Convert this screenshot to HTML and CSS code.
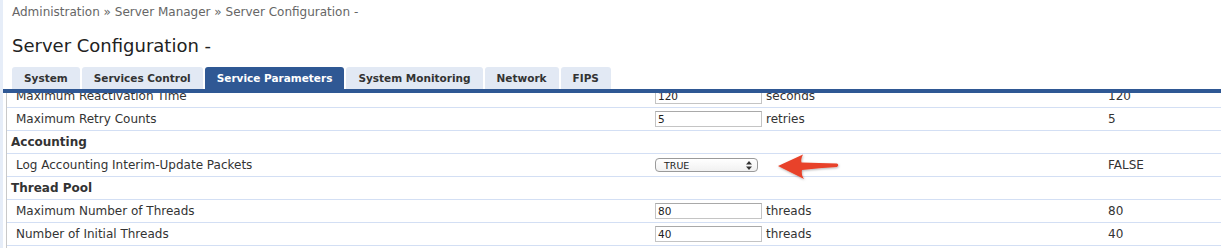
FILE: index.html
```html
<!DOCTYPE html>
<html lang="en">
<head>
    <meta charset="UTF-8">
    <meta name="viewport" content="width=device-width, initial-scale=1.0">
    <title>Server Configuration</title>
    <link rel="stylesheet" href="styles.css">
</head>
<body>
    <div class="page">
        <div class="breadcrumb">Administration &raquo; Server Manager &raquo; Server Configuration -</div>
        <h1 class="title">Server Configuration -</h1>

        <ul class="tabs">
            <li class="tab">System</li>
            <li class="tab">Services Control</li>
            <li class="tab active">Service Parameters</li>
            <li class="tab">System Monitoring</li>
            <li class="tab">Network</li>
            <li class="tab">FIPS</li>
        </ul>

        <div class="params">
            <table class="param-table">
                <colgroup>
                    <col class="col-name">
                    <col class="col-value">
                    <col class="col-unit">
                    <col class="col-default">
                </colgroup>
                <tr>
                    <td class="name">Maximum Reactivation Time</td>
                    <td><input class="num" type="text" value="120"></td>
                    <td class="unit">seconds</td>
                    <td class="default">120</td>
                </tr>
                <tr>
                    <td class="name">Maximum Retry Counts</td>
                    <td><input class="num" type="text" value="5"></td>
                    <td class="unit">retries</td>
                    <td class="default">5</td>
                </tr>
                <tr class="section">
                    <td colspan="4">Accounting</td>
                </tr>
                <tr>
                    <td class="name">Log Accounting Interim-Update Packets</td>
                    <td colspan="2">
                        <div class="select">
                            <span>TRUE</span>
                            <svg class="select-arrows" width="6" height="9" viewBox="0 0 6 9">
                                <path d="M3 0 L6 3.5 L0 3.5 Z M3 9 L6 5.5 L0 5.5 Z" fill="#333"/>
                            </svg>
                        </div>
                    </td>
                    <td class="default">FALSE</td>
                </tr>
                <tr class="section">
                    <td colspan="4">Thread Pool</td>
                </tr>
                <tr>
                    <td class="name">Maximum Number of Threads</td>
                    <td><input class="num" type="text" value="80"></td>
                    <td class="unit">threads</td>
                    <td class="default">80</td>
                </tr>
                <tr>
                    <td class="name">Number of Initial Threads</td>
                    <td><input class="num" type="text" value="40"></td>
                    <td class="unit">threads</td>
                    <td class="default">40</td>
                </tr>
                <tr>
                    <td class="name">&nbsp;</td>
                    <td></td>
                    <td></td>
                    <td></td>
                </tr>
            </table>

            <!-- callout arrow drawn over the table -->
            <svg class="callout" width="72" height="34" viewBox="0 0 72 34">
                <defs>
                    <filter id="shade" x="-10%" y="-20%" width="130%" height="160%">
                        <feDropShadow dx="0.5" dy="1" stdDeviation="0.8" flood-color="#000" flood-opacity="0.3"/>
                    </filter>
                </defs>
                <path d="M5 15 L30 3.5 Q27.5 8.5 28.5 11.5 Q46 12 64 12.5 Q66.5 14 64 16 Q46 17 29 19 Q28 23.5 31 28 Z" fill="#e8432b" filter="url(#shade)"/>
            </svg>
        </div>
    </div>
</body>
</html>
```

FILE: styles.css
```css
html, body {
    margin: 0;
    padding: 0;
    height: 100%;
}
body {
    background-color: #e6edf8;
    font-family: "DejaVu Sans", Verdana, sans-serif;
    color: #333;
    overflow: hidden;
}
.page {
    margin-left: 3px;
    height: 100%;
    background-color: #fff;
    display: flex;
    flex-direction: column;
}
.breadcrumb {
    font-size: 12px;
    line-height: 14px;
    color: #666;
    padding: 5px 0 0 9px;
}
.title {
    font-size: 18px;
    font-weight: normal;
    color: #222;
    line-height: 22px;
    margin: 16px 0 0 9px;
}
.tabs {
    list-style: none;
    margin: 10px 0 0 0;
    padding: 0 0 0 9px;
    display: flex;
    gap: 2px;
    border-bottom: 4px solid #2f5894;
}
.tab {
    font-size: 10.5px;
    font-weight: bold;
    color: #333;
    background-color: #e2e9f4;
    padding: 0 12px;
    height: 22px;
    line-height: 23px;
    border-radius: 3px 3px 0 0;
}
.tab.active {
    background-color: #2f5894;
    color: #fff;
}
.params {
    position: relative;
    flex: 1;
    overflow: hidden;
    margin-left: 3px;
    border-left: 1px solid #c9c9c9;
}
.param-table {
    border-collapse: collapse;
    table-layout: fixed;
    width: 100%;
    margin-top: -8px;
}
.col-name {
    width: 648px;
}
.col-value {
    width: 110px;
}
.col-unit {
    width: 343px;
}
.param-table td {
    height: 22px;
    padding: 0;
    border-bottom: 1px solid #d3dff4;
    font-size: 12px;
    white-space: nowrap;
    vertical-align: middle;
}
.param-table td.name {
    padding-left: 9px;
}
.param-table td.unit {
    padding-left: 1px;
}
.section td {
    font-weight: bold;
    padding-left: 4px;
}
.num {
    display: block;
    box-sizing: border-box;
    width: 107px;
    height: 16px;
    margin: 0;
    padding: 0 2px;
    border: 1px solid #c4c4c4;
    border-top-color: #a9a9a9;
    font-family: "DejaVu Sans", Verdana, sans-serif;
    font-size: 10.5px;
    color: #222;
    background: #fff;
}
.select {
    box-sizing: border-box;
    width: 103px;
    height: 14px;
    border: 1px solid #9a9a9a;
    border-radius: 4px;
    background: linear-gradient(#ffffff, #f1f1f1);
    display: flex;
    align-items: center;
    justify-content: space-between;
    padding: 0 5px 0 8px;
    font-size: 9.5px;
    color: #222;
}
.callout {
    position: absolute;
    left: 766px;
    top: 58px;
}
```
